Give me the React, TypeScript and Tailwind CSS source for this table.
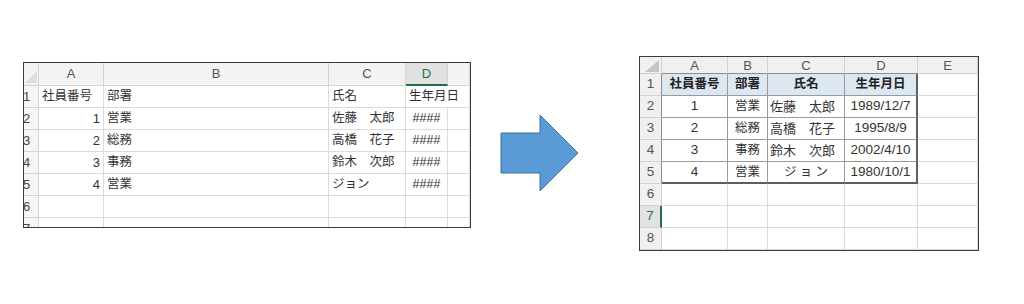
import React from "react";

const FONT = "font-['Liberation_Sans','Noto_Sans_CJK_JP',sans-serif]";

function LeftCorner() {
  return (
    <div className="bg-[#f3f3f3] border-r border-b border-[#d4d4d4] flex items-end justify-end pb-[2px] pr-[1px]">
      <svg width="12" height="12" viewBox="0 0 12 12">
        <polygon points="12,0 12,12 0,12" fill="#dedede" />
      </svg>
    </div>
  );
}

function LColHdr({ label, selected }: { label: string; selected?: boolean }) {
  if (selected) {
    return (
      <div className="bg-[#e1e1e1] border-r border-[#d4d4d4] border-b-2 border-b-[#217346] flex items-center justify-center text-[13px] text-[#217346]">
        {label}
      </div>
    );
  }
  return (
    <div className="bg-[#f3f3f3] border-r border-b border-[#d4d4d4] flex items-center justify-center text-[13px] text-[#555]">
      {label}
    </div>
  );
}

function LRowHdr({ n }: { n: number }) {
  return (
    <div className="bg-[#f6f6f6] border-r border-b border-[#d4d4d4] flex items-center overflow-hidden text-[13px] text-[#444]">
      <span className="-ml-[1px]">{n}</span>
    </div>
  );
}

function LCell({
  text,
  align = "left",
  span,
}: {
  text?: string;
  align?: "left" | "right" | "center";
  span?: boolean;
}) {
  const a =
    align === "right"
      ? "justify-end pr-[3px] text-[13px]"
      : align === "center"
      ? "justify-center text-[12.5px]"
      : "justify-start pl-[3px] text-[12.5px]";
  return (
    <div
      className={`bg-white border-r border-b border-[#dcdcdc] flex items-center whitespace-nowrap text-[#333] ${a} ${
        span ? "col-span-2" : ""
      }`}
    >
      {text}
    </div>
  );
}

function LeftSheet() {
  const rows: [string, string, string][] = [
    ["1", "営業", "佐藤　太郎"],
    ["2", "総務", "高橋　花子"],
    ["3", "事務", "鈴木　次郎"],
    ["4", "営業", "ジョン"],
  ];
  return (
    <div className="ml-[23px] mt-[62px] w-[448px] h-[166px] border border-[#3c3c3c] overflow-hidden shrink-0">
      <div className="grid grid-cols-[15px_65px_225px_77px_42px_22px] grid-rows-[23px_repeat(7,22px)]">
        <LeftCorner />
        <LColHdr label="A" />
        <LColHdr label="B" />
        <LColHdr label="C" />
        <LColHdr label="D" selected />
        <LColHdr label="" />

        <LRowHdr n={1} />
        <LCell text="社員番号" />
        <LCell text="部署" />
        <LCell text="氏名" />
        <LCell text="生年月日" span />

        {rows.map((r, i) => (
          <React.Fragment key={i}>
            <LRowHdr n={i + 2} />
            <LCell text={r[0]} align="right" />
            <LCell text={r[1]} />
            <LCell text={r[2]} />
            <LCell text="####" align="center" />
            <LCell />
          </React.Fragment>
        ))}

        {[6, 7].map((n) => (
          <React.Fragment key={n}>
            <LRowHdr n={n} />
            <LCell />
            <LCell />
            <LCell />
            <LCell />
            <LCell />
          </React.Fragment>
        ))}
      </div>
    </div>
  );
}

function Arrow() {
  return (
    <div className="ml-[29px] mt-[114px] shrink-0">
      <svg width="80" height="80" viewBox="0 0 80 80">
        <polygon
          points="1,19 40,19 40,1 78,39 40,77 40,59 1,59"
          fill="#5b9bd5"
          stroke="#41719c"
          strokeWidth="1"
        />
      </svg>
    </div>
  );
}

function RColHdr({ label, tableTop }: { label: string; tableTop?: boolean }) {
  return (
    <div
      className={`bg-[#f0f0f0] border-r border-[#d2d2d2] border-b flex items-center justify-center text-[13px] leading-none text-[#555] ${
        tableTop ? "border-b-[#8c8c8c]" : "border-b-[#cfcfcf]"
      }`}
    >
      {label}
    </div>
  );
}

function RRowHdr({ n, inTable, selected }: { n: number; inTable?: boolean; selected?: boolean }) {
  if (selected) {
    return (
      <div className="bg-[#e2e2e2] border-b border-[#d2d2d2] border-r-2 border-r-[#217346] flex items-center justify-center text-[13.5px] text-[#217346]">
        {n}
      </div>
    );
  }
  return (
    <div
      className={`bg-[#f0f0f0] border-b border-[#d2d2d2] border-r flex items-center justify-center text-[13.5px] text-[#555] ${
        inTable ? "border-r-[#8c8c8c]" : "border-r-[#cfcfcf]"
      }`}
    >
      {n}
    </div>
  );
}

function TCell({
  children,
  head,
  lastCol,
  lastRow,
  className = "justify-center text-[12.5px]",
}: {
  children?: React.ReactNode;
  head?: boolean;
  lastCol?: boolean;
  lastRow?: boolean;
  className?: string;
}) {
  return (
    <div
      className={`flex items-center whitespace-nowrap ${
        head ? "bg-[#dde7f2] font-bold text-[#222]" : "bg-white text-[#333]"
      } ${lastCol ? "border-r-2 border-r-[#5e5e5e]" : "border-r border-r-[#9a9a9a]"} ${
        lastRow ? "border-b-2 border-b-[#5e5e5e]" : "border-b border-b-[#9a9a9a]"
      } ${className}`}
    >
      {children}
    </div>
  );
}

function GCell() {
  return <div className="bg-white border-r border-b border-[#dadada]" />;
}

function RightSheet() {
  const rows: [string, string, string, string][] = [
    ["1", "営業", "佐藤　太郎", "1989/12/7"],
    ["2", "総務", "高橋　花子", "1995/8/9"],
    ["3", "事務", "鈴木　次郎", "2002/4/10"],
    ["4", "営業", "ジョン", "1980/10/1"],
  ];
  return (
    <div className="ml-[59px] mt-[56px] w-[340px] h-[195px] border border-[#3c3c3c] overflow-hidden shrink-0">
      <div className="grid grid-cols-[22px_66px_40px_77px_73px_60px] grid-rows-[17px_repeat(8,22px)]">
        <div className="bg-[#f0f0f0] border-r border-b border-[#cfcfcf] flex items-end justify-end pb-[1px] pr-[2px]">
          <svg width="14" height="12" viewBox="0 0 14 12">
            <polygon points="14,0 14,12 0,12" fill="#c4c4c4" />
          </svg>
        </div>
        <RColHdr label="A" tableTop />
        <RColHdr label="B" tableTop />
        <RColHdr label="C" tableTop />
        <RColHdr label="D" tableTop />
        <RColHdr label="E" />

        <RRowHdr n={1} inTable />
        <TCell head>社員番号</TCell>
        <TCell head>部署</TCell>
        <TCell head>氏名</TCell>
        <TCell head lastCol>生年月日</TCell>
        <GCell />

        {rows.map((r, i) => (
          <React.Fragment key={i}>
            <RRowHdr n={i + 2} inTable />
            <TCell lastRow={i === 3} className="justify-center text-[13.5px]">
              {r[0]}
            </TCell>
            <TCell lastRow={i === 3}>{r[1]}</TCell>
            {r[2] === "ジョン" ? (
              <TCell lastRow className="justify-between pl-[16px] pr-[16px] text-[12.5px]">
                <span>ジ</span>
                <span>ョ</span>
                <span>ン</span>
              </TCell>
            ) : (
              <TCell lastRow={i === 3} className="justify-start pl-[2px] text-[13px]">
                {r[2]}
              </TCell>
            )}
            <TCell lastRow={i === 3} lastCol className="justify-center text-[13.5px]">
              {r[3]}
            </TCell>
            <GCell />
          </React.Fragment>
        ))}

        {[6, 7, 8].map((n) => (
          <React.Fragment key={n}>
            <RRowHdr n={n} selected={n === 7} />
            <GCell />
            <GCell />
            <GCell />
            <GCell />
            <GCell />
          </React.Fragment>
        ))}
      </div>
    </div>
  );
}

export default function App() {
  return (
    <div className={`w-[1024px] h-[304px] bg-white flex items-start overflow-hidden ${FONT}`}>
      <LeftSheet />
      <Arrow />
      <RightSheet />
    </div>
  );
}
